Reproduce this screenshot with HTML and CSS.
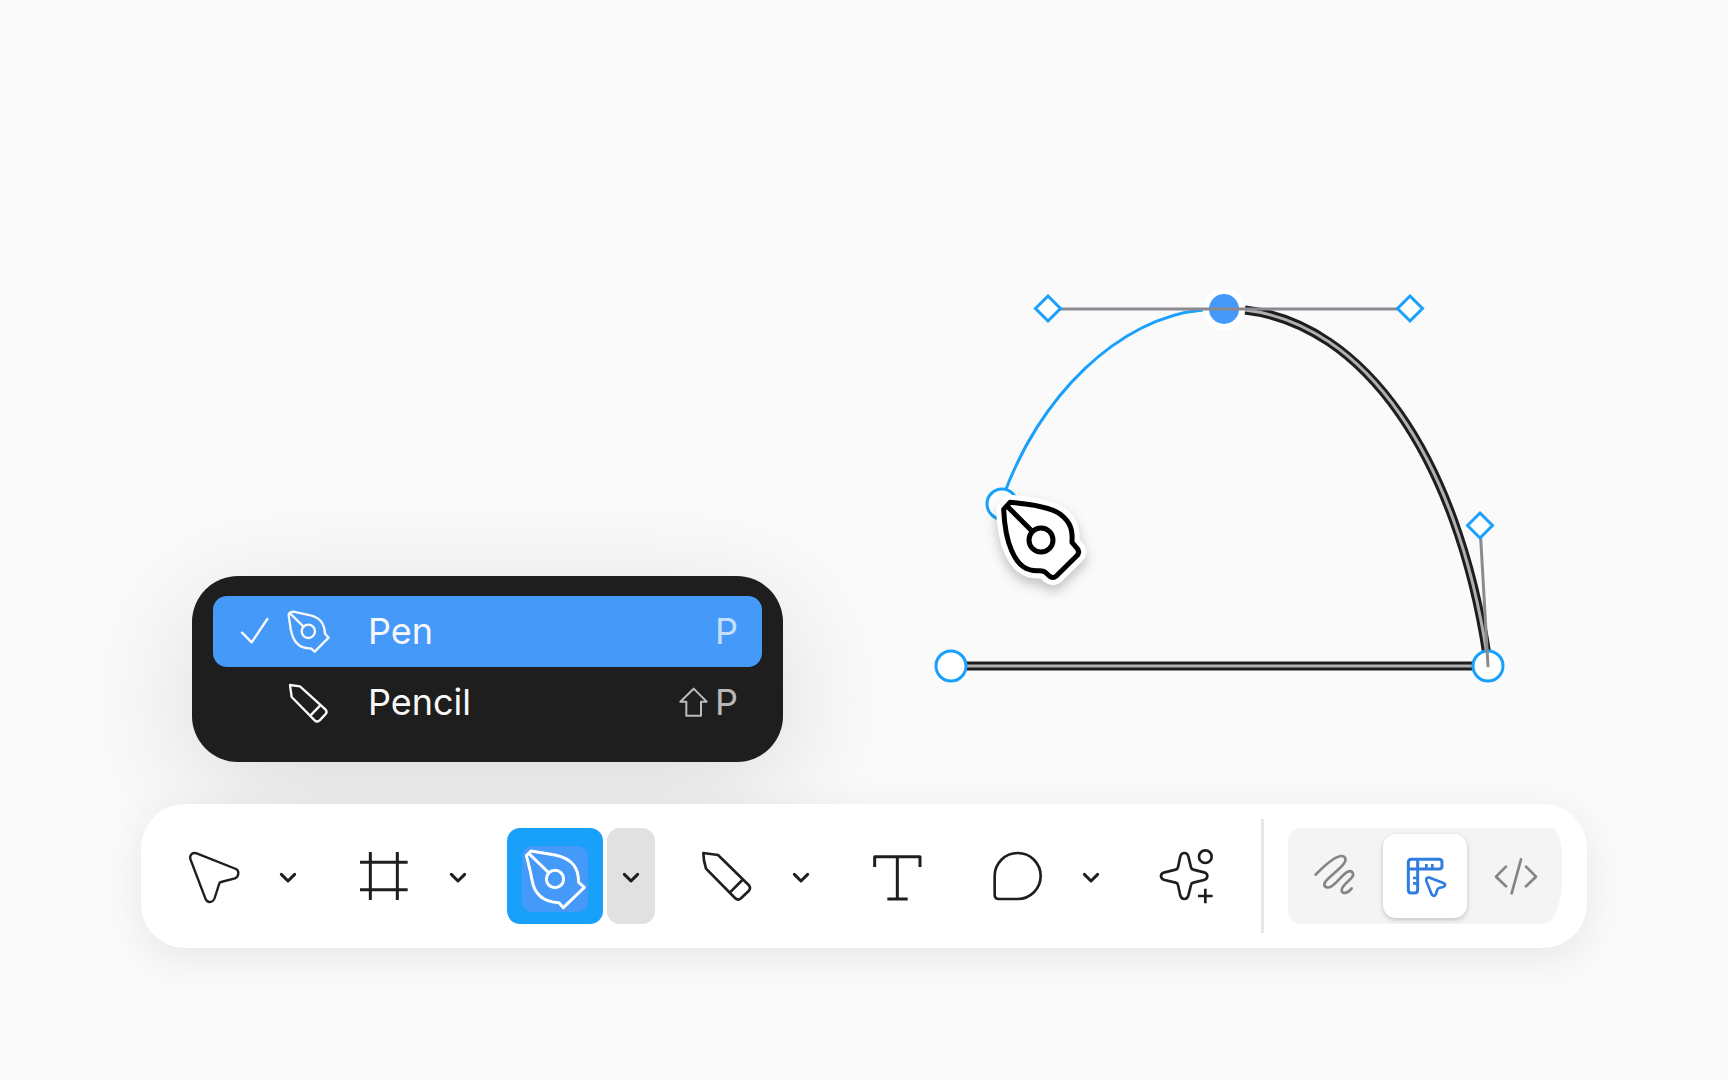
FILE: index.html
```
<!DOCTYPE html>
<html lang="en">
<head>
<meta charset="utf-8">
<meta name="viewport" content="width=device-width, initial-scale=1">
<title>Pen tool</title>
<link rel="stylesheet" href="styles.css">
</head>
<body>
<main class="editor">
  <svg class="canvas" width="1728" height="800" viewBox="0 0 1728 800" role="img" aria-label="Vector path being drawn">
    <path class="path-outer" d="M951 666H1488M1245 310C1365 324 1457 458 1487 655"/>
    <path class="path-inner" d="M951 666H1488M1245 310C1365 324 1457 458 1487 655"/>
    <path class="path-preview" d="M1203 310C1120 317 1038 396 1002 500"/>
    <circle class="node" cx="951" cy="666" r="15"/>
    <circle class="node" cx="1488" cy="666" r="15"/>
    <circle class="node" cx="1002" cy="504" r="15"/>
    <circle cx="1224" cy="309" r="21" fill="#fff"/>
    <circle cx="1224" cy="309" r="15" fill="#4499f9"/>
    <path class="handle-line" d="M1048 309H1410M1480 526L1488 666"/>
    <path class="handle" d="M1048 296l12.500 12.500-12.500 12.500-12.500-12.500zM1410 296l12.500 12.500-12.500 12.500-12.500-12.500zM1480 513l12.500 12.500-12.500 12.500-12.500-12.500z"/>
    <g class="cursor">
      <g transform="translate(930 290) scale(.33333)">
        <path class="cursor-halo" d="M240 637C320 644 365 655 390 672C425 698 428 725 426 757L442 776Q450 786 442 796L379 858Q369 867 358 858L345 846Q340 842 330 842C290 845 265 828 245 782C228 745 223 700 221 658Z"/>
        <path class="cursor-line" d="M240 637C320 644 365 655 390 672C425 698 428 725 426 757L442 776Q450 786 442 796L379 858Q369 867 358 858L345 846Q340 842 330 842C290 845 265 828 245 782C228 745 223 700 221 658ZM230 647L305 722"/>
        <circle class="cursor-line" cx="333" cy="750" r="36"/>
      </g>
    </g>
  </svg>

  <div class="menu" role="menu" aria-label="Drawing tools">
    <button class="menu-item selected" role="menuitemradio" aria-checked="true">
      <svg class="check" viewBox="99 108 210 213"><path class="line w6" d="M186 218L215 247L262 177"/></svg>
      <svg class="menu-icon" viewBox="309 108 255 213">
        <path class="line w6" d="M326 166Q326 156 340 155L395 167C428 177 434 199 435 221L446 233L404 275L393 265C353 267 338 241 332 207ZM331 161L370 199"/>
        <circle class="line w6" cx="385" cy="214" r="20"/>
      </svg>
      <span class="label">Pen</span><kbd class="shortcut">P</kbd>
    </button>
    <button class="menu-item" role="menuitemradio" aria-checked="false">
      <span class="check"></span>
      <svg class="menu-icon" viewBox="309 321 255 213"><path class="line w6" d="M330 375L360 379L437 449Q443 456 436 463L419 481Q411 488 404 481L335 411ZM420 437L391 467"/></svg>
      <span class="label">Pencil</span>
      <kbd class="shortcut"><svg class="shift" viewBox="600 376 90 96"><path class="line w4" d="M644 384L683 423H666V465H622V423H604Z"/></svg>P</kbd>
    </button>
  </div>

  <nav class="toolbar" aria-label="Toolbar">
    <div class="group">
      <button class="tool" aria-label="Move"><svg class="tool-icon" viewBox="108 114 288 288"><path class="line w6" d="M200 190L318 237Q326 241 325 251Q324 261 315 265L273 276Q268 277 267 283L254 324Q250 336 239 336Q230 336 226 325L181 207Q179 198 185 192Q192 187 200 190Z"/></svg></button>
      <button class="more" aria-label="Move options"><svg class="chevron" viewBox="0 0 144 288"><path class="line w8" d="M52 139l20 20 20-20"/></svg></button>
    </div>
    <div class="group">
      <button class="tool" aria-label="Frame"><svg class="tool-icon" viewBox="618 114 288 288"><path class="line w8 butt" d="M721 186V330M802 186V330M690 217H833M690 299H833"/></svg></button>
      <button class="more" aria-label="Frame options"><svg class="chevron" viewBox="0 0 144 288"><path class="line w8" d="M52 139l20 20 20-20"/></svg></button>
    </div>
    <div class="group active">
      <button class="tool" aria-label="Pen" aria-pressed="true"><svg class="tool-icon" viewBox="51 84 288 288">
        <rect x="96" y="138" width="198" height="198" rx="30" fill="#4499f9"/>
        <path class="line w8" d="M109 167L123 153L195 165C250 177 265 205 266 247L283 262L220 323L207 308C150 306 132 275 126 240C122 215 116 195 109 167ZM116 160L174 216"/>
        <circle class="line w8" cx="195" cy="237" r="26"/></svg></button>
      <button class="more" aria-label="Drawing tool options" aria-expanded="true"><svg class="chevron" viewBox="0 0 144 288"><path class="line w8" d="M52 139l20 20 20-20"/></svg></button>
    </div>
    <div class="group">
      <button class="tool" aria-label="Pencil"><svg class="tool-icon" viewBox="567 84 288 288"><path class="line w7" d="M640 159L684 165L776 255Q784 264 776 273L753 295Q744 303 735 294L648 206Q640 180 640 159ZM757 240L720 277"/></svg></button>
      <button class="more" aria-label="Pencil options"><svg class="chevron" viewBox="0 0 144 288"><path class="line w8" d="M52 139l20 20 20-20"/></svg></button>
    </div>
    <button class="tool" aria-label="Text"><svg class="tool-icon" viewBox="87 84 288 288"><path class="line w8 butt" d="M164 201V170H300V201M232 170V297M202 297H263"/></svg></button>
    <div class="group">
      <button class="tool" aria-label="Comment"><svg class="tool-icon" viewBox="447 84 288 288"><path class="line w7" d="M593 159A69 69 0 0 1 593 297H537Q524 297 524 284V228A69 69 0 0 1 593 159Z"/></svg></button>
      <button class="more" aria-label="Comment options"><svg class="chevron" viewBox="0 0 144 288"><path class="line w8" d="M52 139l20 20 20-20"/></svg></button>
    </div>
    <button class="tool" aria-label="Actions"><svg class="tool-icon" viewBox="957 84 288 288">
      <path class="line w7" d="M1081 169Q1084 159 1093 159Q1102 159 1105 169L1113 202Q1114 208 1120 209L1152 217Q1162 220 1162 228Q1162 237 1152 240L1120 248Q1114 249 1113 255L1105 287Q1102 297 1093 297Q1084 297 1081 287L1074 255Q1073 249 1067 248L1034 240Q1023 237 1023 228Q1023 220 1034 217L1067 209Q1073 208 1074 202Z"/>
      <circle class="line w7" cx="1156" cy="170" r="19"/><path class="line w7 butt" d="M1156 266V310M1134 288H1178"/></svg></button>

    <span class="divider"></span>
    <div class="modes" role="group" aria-label="Mode">
      <button class="mode" aria-label="Draw"><svg class="mode-icon" viewBox="186 132 252 252"><path class="line w7" d="M257 254C285 225 312 202 332 198C345 197 350 207 344 217C335 235 296 260 285 277C278 290 292 296 303 290C325 276 336 253 356 244C368 241 373 253 366 262C357 275 336 285 335 301C336 314 355 310 365 295"/></svg></button>
      <button class="mode current" aria-label="Design" aria-pressed="true"><svg class="mode-icon" viewBox="462 132 252 252"><path class="line w8" d="M546 208H630Q639 208 639 217V228Q639 237 630 237H566V299Q566 309 556 309H547Q538 309 538 299V217Q538 208 547 208ZM566 208V237M538 237H566"/><path class="line w7 butt" d="M592 222V236M610 222V236M552 264H566M552 280H566"/><path class="line w7" d="M602 263L643 279Q654 284 643 291L630 294Q625 296 624 302L621 312Q616 323 608 313L592 273Q590 260 602 263Z"/></svg></button>
      <button class="mode" aria-label="Dev mode"><svg class="mode-icon" viewBox="732 132 252 252"><path class="line w7" d="M828 230L798 260L828 289M888 230L918 260L888 289M873 208L845 310"/></svg></button>
    </div>
  </nav>
</main>
</body>
</html>
```
FILE: styles.css
```
* { box-sizing: border-box; }

body {
  margin: 0;
  background: #fafafa;
  color: #1e1e1e;
  font-family: Inter, "Liberation Sans", sans-serif;
  overflow-x: hidden;
}

button {
  margin: 0;
  padding: 0;
  border: 0;
  background: none;
  color: inherit;
  font: inherit;
}

svg { display: block; }

.editor {
  position: relative;
  min-height: 100vh;
  display: flex;
  flex-direction: column;
  justify-content: flex-end;
  align-items: flex-start;
  gap: 42px;
  padding: 0 141px 132px;
}

/* Strokes shared by all icons */
.line {
  fill: none;
  stroke: currentColor;
  stroke-linecap: round;
  stroke-linejoin: round;
}
.w4 { stroke-width: 6; }
.w6 { stroke-width: 7; }
.w7 { stroke-width: 8; }
.w8 { stroke-width: 9; }
.butt { stroke-linecap: butt; }

/* Drawing surface */
.canvas {
  position: absolute;
  top: 0;
  left: 0;
}
.path-outer { fill: none; stroke: #1e1e1e; stroke-width: 9; }
.path-inner { fill: none; stroke: #b0b0b2; stroke-width: 3; }
.path-preview { fill: none; stroke: #18a0fb; stroke-width: 3; }
.node, .handle { fill: #fff; stroke: #18a0fb; stroke-width: 3; }
.handle-line { fill: none; stroke: #8a8a90; stroke-width: 3; stroke-linecap: round; }
.cursor { filter: drop-shadow(0 6px 6px rgba(0, 0, 0, 0.22)); }
.cursor-halo { fill: #fff; stroke: #fff; stroke-width: 46; stroke-linejoin: round; }
.cursor-line { fill: #fff; stroke: #000; stroke-width: 15; stroke-linejoin: round; }

/* Tool menu */
.menu {
  position: relative;
  width: 591px;
  margin-left: 51px;
  padding: 20px 21px 24px;
  border-radius: 46px;
  background: #1e1e1e;
  color: #f8f8f8;
  box-shadow: 0 30px 120px rgba(0, 0, 0, 0.13);
}
.menu-item {
  display: flex;
  align-items: center;
  width: 100%;
  height: 71px;
  padding-right: 24px;
  border-radius: 14px;
  font-size: 36px;
  line-height: 44px;
}
.menu-item.selected { background: #4499f9; }
.check { width: 70px; height: 71px; }
.menu-icon { width: 85px; height: 71px; }
.label { flex: 1; text-align: left; }
.label, .shortcut { padding-bottom: 2px; }
.shortcut {
  display: flex;
  align-items: center;
  gap: 6px;
  font: inherit;
  color: rgba(255, 255, 255, 0.7);
}
.shift { width: 30px; height: 32px; }

/* Toolbar */
.toolbar {
  position: relative;
  display: flex;
  align-items: center;
  gap: 24px;
  width: 100%;
  height: 144px;
  padding: 0 25px;
  border-radius: 44px;
  background: #fff;
  box-shadow: 0 10px 40px rgba(0, 0, 0, 0.08);
}
.group { display: flex; gap: 2px; }
.tool, .more { border-radius: 13px; }
.tool-icon { width: 96px; height: 96px; }
.chevron { width: 48px; height: 96px; }
.active { gap: 4px; margin-left: 1px; }
.active .tool { background: #18a0fb; color: #fff; }
.active .more { background: #e1e1e1; }
.divider {
  width: 3px;
  height: 114px;
  margin-left: auto;
  background: #e6e6e6;
}
.modes {
  display: flex;
  align-items: center;
  gap: 7px;
  height: 96px;
  padding: 0 4px;
  border-radius: 14px 10px 18px 14px / 14px 28px 46px 14px;
  background: #f4f4f4;
}
.mode { border-radius: 13px; color: #858585; }
.mode-icon { width: 84px; height: 84px; }
.mode.current {
  background: #fff;
  color: #2f7de1;
  box-shadow: 0 2px 5px rgba(0, 0, 0, 0.2);
}
```
